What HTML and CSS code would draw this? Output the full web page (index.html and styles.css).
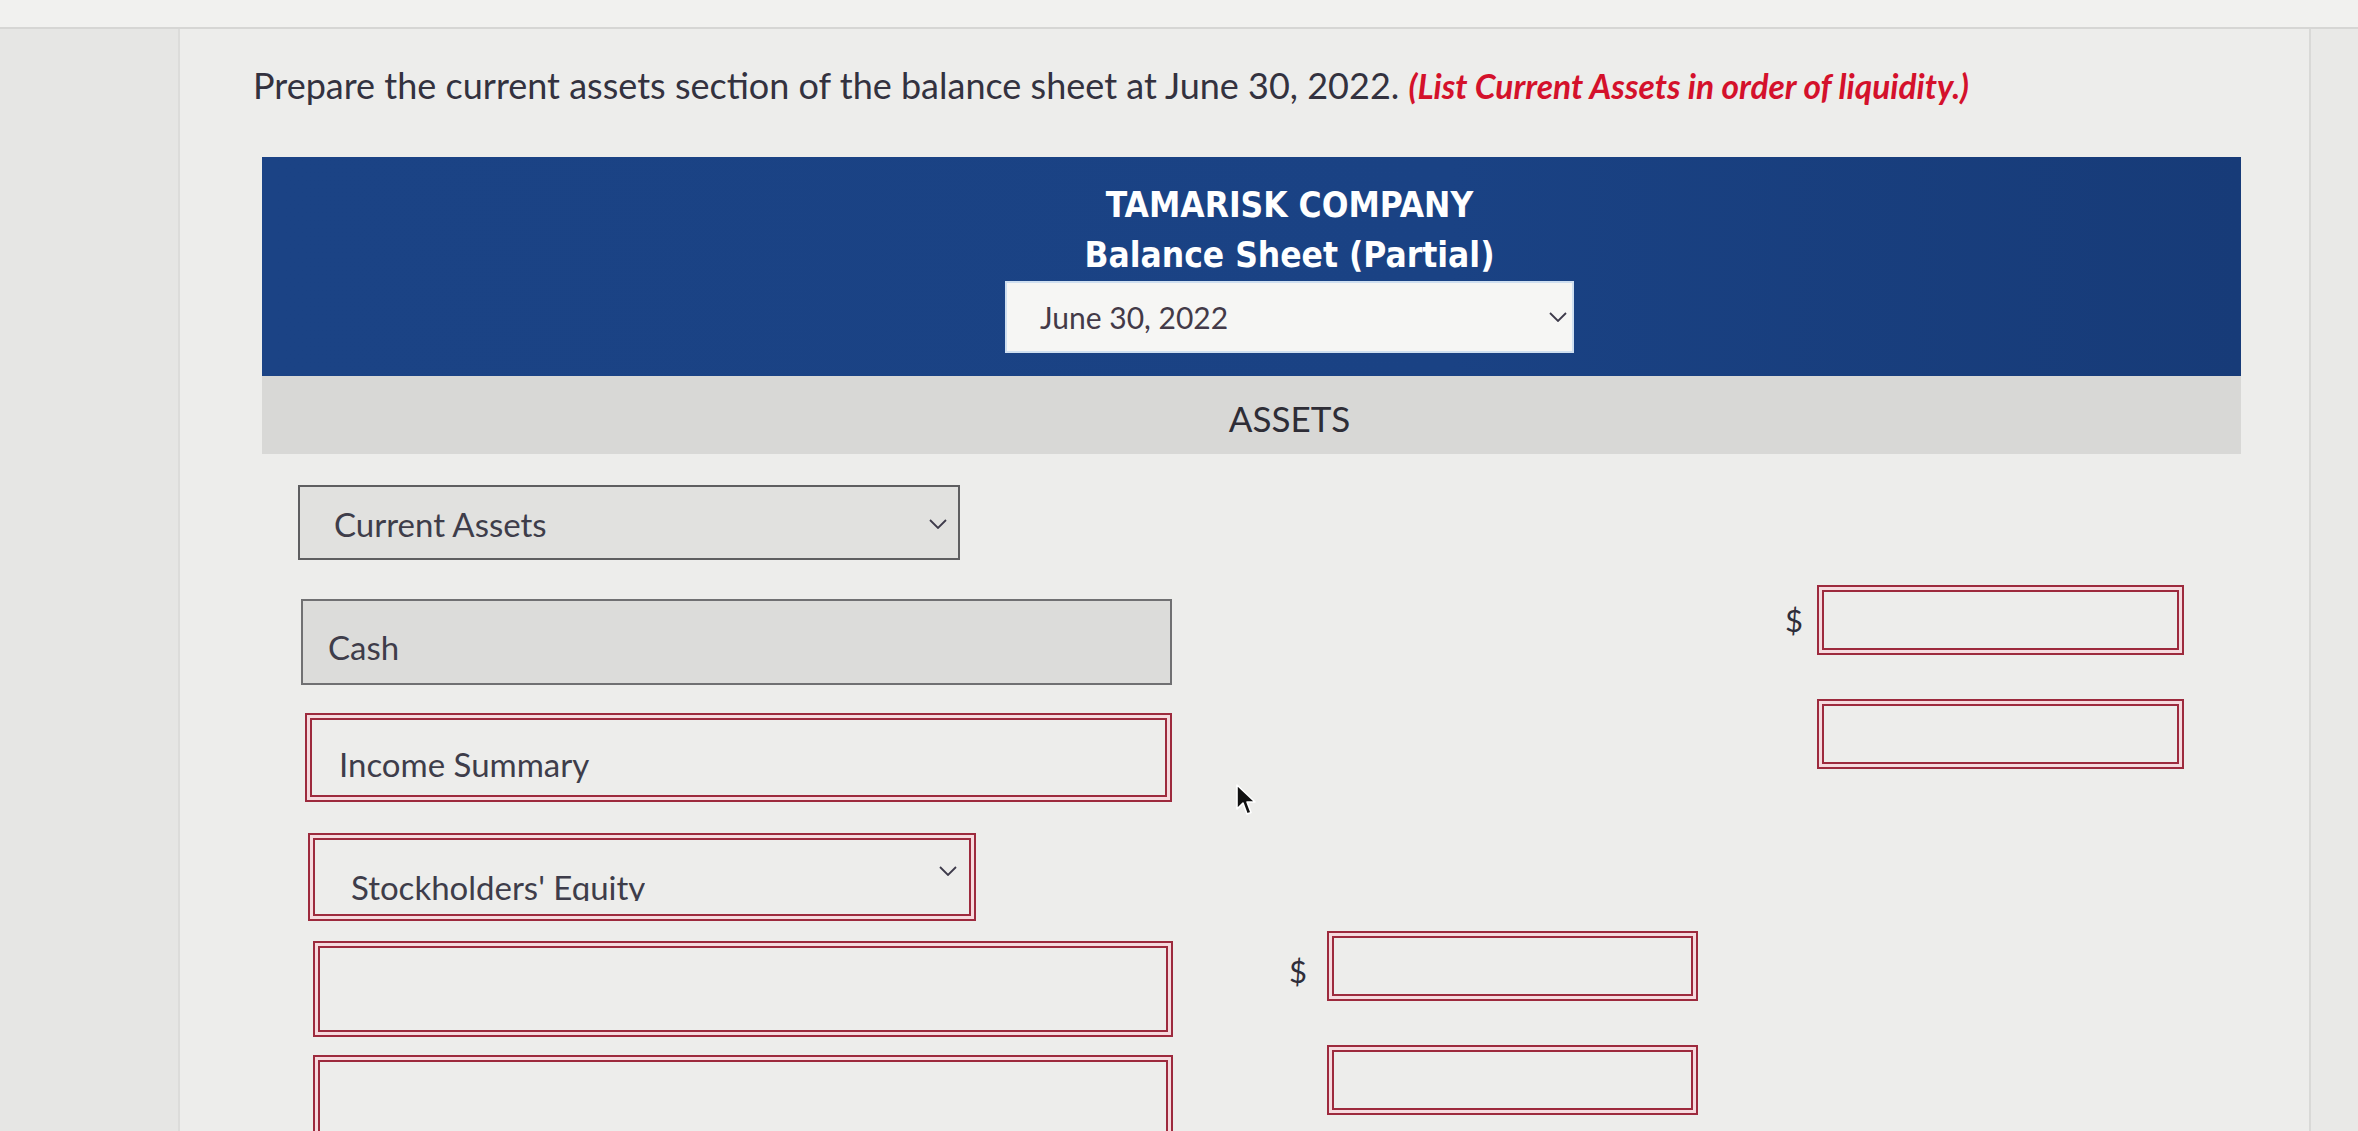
FILE: index.html
```html
<!DOCTYPE html>
<html lang="en">
<head>
<meta charset="utf-8">
<title>Balance Sheet (Partial)</title>
<link rel="stylesheet" href="styles.css">
</head>
<body>
<div class="screen">
  <div class="topstrip"></div>
  <div class="body-row">
    <div class="gutter-left"></div>
    <main class="panel">
      <p class="question">Prepare the current assets section of the balance sheet at June 30, 2022. <em class="hint">(List Current Assets in order of liquidity.)</em></p>
      <section class="sheet">
        <header class="sheet-head">
          <div class="company">TAMARISK COMPANY</div>
          <div class="title">Balance Sheet (Partial)</div>
          <div class="date-select">
            <span>June 30, 2022</span>
            <svg class="chev" viewBox="0 0 18 10" width="18" height="10"><path d="M1 1 L9 9 L17 1" fill="none" stroke="#3d3a4a" stroke-width="1.8"/></svg>
          </div>
        </header>
        <div class="band">ASSETS</div>
        <div class="form">
          <div class="field select gray-dark r1">
            <span class="txt">Current Assets</span>
            <svg class="chev" viewBox="0 0 18 10" width="18" height="10"><path d="M1 1 L9 9 L17 1" fill="none" stroke="#3d3a4a" stroke-width="1.8"/></svg>
          </div>

          <div class="field gray-light r2"><span class="txt">Cash</span></div>
          <div class="dollar c2 r2">$</div>
          <div class="amount c2 r2"></div>

          <div class="field red r3"><span class="txt">Income Summary</span></div>
          <div class="amount c2 r3"></div>

          <div class="field select red r4">
            <span class="clip">Stockholders' Equity</span>
            <svg class="chev" viewBox="0 0 18 10" width="18" height="10"><path d="M1 1 L9 9 L17 1" fill="none" stroke="#3d3a4a" stroke-width="1.8"/></svg>
          </div>

          <div class="field red r5"></div>
          <div class="dollar c1 r5">$</div>
          <div class="amount c1 r5"></div>

          <div class="field red r6"></div>
          <div class="amount c1 r6"></div>
        </div>
      </section>
    </main>
    <div class="gutter-right"></div>
  </div>
  <svg class="cursor" viewBox="0 0 22 34" width="22" height="34"><path d="M2 2 L2 26 L8 20 L12 31 L16 29.5 L12 19 L20 19 Z" fill="#111" stroke="#fff" stroke-width="1.6" stroke-linejoin="round"/></svg>
</div>
</body>
</html>
```

FILE: styles.css
```css
* { box-sizing: border-box; }
html, body { margin: 0; padding: 0; }
body {
  width: 2358px;
  height: 1131px;
  overflow: hidden;
  background: #e7e7e5;
  font-family: "Lato", "Liberation Sans", sans-serif;
  color: #35343f;
}
.screen {
  position: relative;
  width: 2358px;
  height: 1131px;
  display: flex;
  flex-direction: column;
}
.topstrip {
  height: 29px;
  flex: none;
  background: #f1f1ef;
  border-bottom: 2px solid #d6d6d4;
}
.body-row {
  flex: 1;
  display: flex;
  min-height: 0;
}
.gutter-left {
  width: 180px;
  flex: none;
  background: #e6e6e4;
  border-right: 2px solid #dcdcda;
}
.gutter-right {
  width: 49px;
  flex: none;
  background: #e9e9e7;
  border-left: 2px solid #d9d9d7;
}
.panel {
  flex: 1;
  background: #ededeb;
  padding: 35px 0 0 73px;
  overflow: hidden;
}
.question {
  margin: 0;
  font-size: 36px;
  line-height: 43px;
  color: #33323f;
  white-space: nowrap;
}
.hint {
  color: #d4112b;
  font-weight: 700;
  font-style: italic;
  font-size: 33.5px;
}
.sheet {
  margin: 49px 0 0 9px;
  width: 1979px;
}
.sheet-head {
  background: linear-gradient(90deg, #1b4385 0%, #1a4284 60%, #173b78 100%);
  padding: 23px 0 23px 76px;
  display: flex;
  flex-direction: column;
  align-items: center;
  color: #fff;
  font-family: "DejaVu Sans Condensed", "DejaVu Sans", sans-serif;
  font-stretch: condensed;
  font-weight: 700;
}
.company, .title {
  font-size: 35px;
  line-height: 50px;
}
.title { margin-bottom: 1px; }
.date-select {
  width: 569px;
  height: 72px;
  background: #f6f6f4;
  border: 2px solid #cfdff0;
  display: flex;
  align-items: center;
  justify-content: space-between;
  padding: 0 5px 0 33px;
  font-family: "Lato", sans-serif;
  font-stretch: normal;
  font-weight: 400;
  font-size: 30px;
  color: #433a48;
}
.band {
  height: 78px;
  background: #d8d8d6;
  display: flex;
  align-items: center;
  justify-content: center;
  padding: 6px 0 0 76px;
  font-size: 35px;
  color: #2e2d36;
}
.form {
  display: grid;
  grid-template-columns: 875px 117px 37px 371px 77px 42px 367px;
  grid-template-rows: repeat(6, 86px);
  row-gap: 28px;
  margin: 31px 0 0 36px;
}
.field {
  grid-column: 1;
  align-self: start;
  display: flex;
  align-items: center;
  font-size: 33px;
  color: #3e3d4a;
}
.r1 { grid-row: 1; }
.r2 { grid-row: 2; }
.r3 { grid-row: 3; }
.r4 { grid-row: 4; }
.r5 { grid-row: 5; }
.r6 { grid-row: 6; }
.select { justify-content: space-between; }
.field.r1 {
  width: 662px;
  height: 75px;
  padding: 3px 11px 0 34px;
}
.field.r2 {
  margin-left: 3px;
  width: 871px;
  height: 86px;
  padding: 10px 0 0 25px;
}
.field.r3 {
  margin-left: 7px;
  width: 867px;
  height: 89px;
  padding: 12px 0 0 32px;
}
.field.r4 {
  margin-top: 6px;
  margin-left: 10px;
  width: 668px;
  height: 88px;
  align-items: flex-start;
  padding: 0 17px 0 41px;
}
.field.r5, .field.r6 {
  margin-left: 15px;
  width: 860px;
  height: 96px;
}
.gray-dark {
  background: #e1e1df;
  border: 2px solid #5e5e60;
}
.gray-light {
  background: #dcdcda;
  border: 2px solid #707072;
}
.red {
  background: #ededeb;
  border: 2px solid #9d2a3d;
  box-shadow: inset 0 0 0 3px #f6dade, inset 0 0 0 5px #9d2a3d;
}
.field.r4 .clip {
  display: block;
  margin-top: 36px;
  height: 30px;
  line-height: 33px;
  overflow: hidden;
  white-space: nowrap;
}
.field.r4 .chev { margin-top: 31px; }
.chev { flex: none; }
.dollar {
  align-self: start;
  margin-top: -14px;
  height: 70px;
  display: flex;
  align-items: center;
  justify-content: flex-end;
  padding-right: 14px;
  font-size: 31px;
  color: #2f2e3a;
}
.dollar.c1 {
  grid-column: 2 / 4;
  margin-top: -10px;
  padding-right: 20px;
  padding-top: 10px;
}
.dollar.c2 { grid-column: 6; }
.amount {
  align-self: start;
  margin-top: -14px;
  height: 70px;
  border: 2px solid #9d2a3d;
  box-shadow: inset 0 0 0 3px #f6dade, inset 0 0 0 5px #9d2a3d;
  background: #ededeb;
}
.amount.c1 {
  grid-column: 4;
  margin-top: -10px;
}
.amount.c2 { grid-column: 7; }
.cursor {
  position: absolute;
  left: 1235px;
  top: 783px;
}
```
